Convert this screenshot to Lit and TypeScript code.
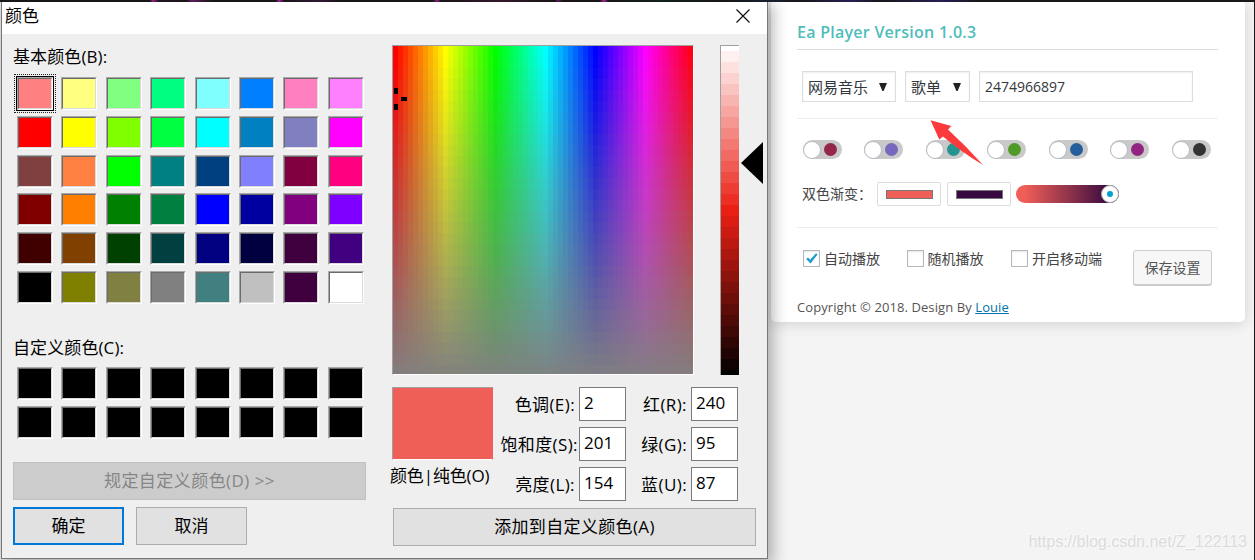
import { LitElement, html, css } from "lit";
import { customElement, property } from "lit/decorators.js";
import { classMap } from "lit/directives/class-map.js";

const BASIC = [
  "#ff8080", "#ffff80", "#80ff80", "#00ff80", "#80ffff", "#0080ff", "#ff80c0", "#ff80ff",
  "#ff0000", "#ffff00", "#80ff00", "#00ff40", "#00ffff", "#0080c0", "#8080c0", "#ff00ff",
  "#804040", "#ff8040", "#00ff00", "#008080", "#004080", "#8080ff", "#800040", "#ff0080",
  "#800000", "#ff8000", "#008000", "#008040", "#0000ff", "#0000a0", "#800080", "#8000ff",
  "#400000", "#804000", "#004000", "#004040", "#000080", "#000040", "#400040", "#400080",
  "#000000", "#808000", "#808040", "#808080", "#408080", "#c0c0c0", "#400040", "#ffffff",
];
const CUSTOM = Array(16).fill("#000000");
const THEMES = ["#94264a", "#7767bd", "#259490", "#509a28", "#255f9b", "#932582", "#333333"];

const stops = (n: number, size: number, color: (i: number) => string, shift = 0) =>
  Array.from({ length: n }, (_, i) => {
    const a = Math.max(0, (i - shift) * size);
    return `${color(i)} ${a}px ${(i + 1 - shift) * size}px`;
  }).join(",");

// Hue runs across in 60 cells, saturation fades to grey down 30 rows.
const HUE = `linear-gradient(to right,${stops(60, 5, (i) => `hsl(${i * 6},100%,50%)`)})`;
const FADE = `linear-gradient(to bottom,${stops(30, 11, (i) => `rgba(128,128,128,${(i / 30).toFixed(3)})`)})`;
const LUM = `linear-gradient(to bottom,${stops(31, 10.97, (i) => `hsl(3,84%,${(100 - (i * 100) / 30).toFixed(2)}%)`, 0.5)})`;

@customElement("swatch-grid")
export class SwatchGrid extends LitElement {
  @property({ attribute: false }) colors: string[] = [];
  @property({ type: Number }) selected = -1;

  static styles = css`
    :host { display: block; }
    .grid {
      display: grid;
      grid-template-columns: repeat(8, 36px);
      grid-auto-rows: 33px;
      column-gap: 8.4px;
      row-gap: 5.8px;
    }
    .swatch {
      box-sizing: border-box;
      border: 1px solid;
      border-color: #a8a8a8 #fff #fff #a8a8a8;
      display: flex;
    }
    .fill {
      flex: 1;
      border: 1px solid;
      border-color: #6b6b6b #dcdcdc #dcdcdc #6b6b6b;
    }
    .selected { outline: 1px solid #000; position: relative; }
    .selected::after {
      content: "";
      position: absolute;
      inset: -4px;
      border: 1px dotted #222;
    }
  `;

  render() {
    return html`<div class="grid">
      ${this.colors.map(
        (c, i) => html`<div class=${classMap({ swatch: true, selected: i === this.selected })}>
          <div class="fill" style="background:${c}"></div>
        </div>`
      )}
    </div>`;
  }
}

@customElement("color-dialog")
export class ColorDialog extends LitElement {
  static styles = css`
    :host { display: block; }
    * { box-sizing: border-box; }
    .dialog {
      width: 767px;
      height: 557px;
      border: 1px solid #777;
      border-top: 0;
      background: #efefef;
      color: #000;
      font: 17px/22px "Open Sans", "Noto Sans CJK SC", sans-serif;
      box-shadow: 3px 4px 14px 2px rgba(0, 0, 0, 0.3);
      white-space: nowrap;
    }
    .title {
      height: 32px;
      background: #fff;
      display: flex;
      justify-content: space-between;
      padding: 3px 16px 0 3px;
    }
    .close { width: 16px; height: 16px; margin-top: 3px; display: block; }
    .body { display: flex; padding-top: 11px; }
    .left { width: 390px; padding-left: 11px; flex: none; }
    .label { height: 22px; letter-spacing: 0.1px; }
    .label.basic { margin-top: 1px; }
    .label.custom { margin-top: 33px; }
    .basicgrid { margin: 9px 0 0 4px; }
    .customgrid { margin: 8px 0 0 4px; }
    .btn {
      height: 38px;
      border: 1px solid #adadad;
      background: #e1e1e1;
      display: flex;
      align-items: center;
      justify-content: center;
    }
    .define {
      width: 353px;
      margin-top: 23px;
      background: #ccc;
      border-color: #c0c0c0;
      color: #868686;
      letter-spacing: 0.45px;
    }
    .pair { display: flex; gap: 12px; margin-top: 7px; }
    .pair .btn { width: 111px; }
    .pair .ok { border: 2px solid #0078d7; }
    .right { width: 374px; flex: none; }
    .pickers { display: flex; height: 331px; }
    .field {
      flex: none;
      width: 302px;
      height: 330px;
      border: 1px solid #a0a0a0;
      border-right-color: #fff;
      border-bottom-color: #fff;
      position: relative;
    }
    .mark { position: absolute; background: #000; }
    .m1 { left: 1px; top: 42px; width: 4px; height: 6px; }
    .m2 { left: 8px; top: 51px; width: 6px; height: 4px; }
    .m3 { left: 1px; top: 58px; width: 4px; height: 6px; }
    .lum {
      flex: none;
      width: 19px;
      height: 330px;
      margin-left: 26px;
      border-left: 1px solid #a0a0a0;
      border-top: 1px solid #a0a0a0;
    }
    .pointer { flex: none; width: 22px; height: 42px; margin: 97px 0 0 2px; display: block; }
    .values { display: flex; margin-top: 11px; height: 114px; }
    .preview { width: 101px; }
    .chip { height: 73px; background: #f05f57; border: 1px solid; border-color: #a0a0a0 #f05f57 #fff #a0a0a0; }
    .caption { margin: 5px 0 0 -2px; letter-spacing: -0.15px; }
    .form {
      display: grid;
      grid-template-columns: 86px 47px 65px 47px;
      grid-auto-rows: 34px;
      row-gap: 6px;
    }
    .name { text-align: right; padding: 7px 4px 0 0; letter-spacing: 0.4px; }
    .name.wide { padding-right: 1px; }
    .num { border: 1px solid #7a7a7a; background: #fff; padding: 4px 0 0 4px; }
    .add { width: 363px; margin: 7px 0 0 1px; letter-spacing: 0.35px; }
  `;

  render() {
    const cell = (a: string, v: string, wide = false) => html`
      <div class=${classMap({ name: true, wide })}>${a}</div>
      <div class="num">${v}</div>`;
    return html`<div class="dialog">
      <div class="title">
        <span>颜色</span>
        <svg class="close" viewBox="0 0 16 16">
          <path d="M1.5 1.5 14.5 14.5M14.5 1.5 1.5 14.5" stroke="#111" stroke-width="1.2" fill="none" />
        </svg>
      </div>
      <div class="body">
        <div class="left">
          <div class="label basic">基本颜色(B):</div>
          <swatch-grid class="basicgrid" .colors=${BASIC} selected="0"></swatch-grid>
          <div class="label custom">自定义颜色(C):</div>
          <swatch-grid class="customgrid" .colors=${CUSTOM}></swatch-grid>
          <div class="btn define">规定自定义颜色(D) &gt;&gt;</div>
          <div class="pair">
            <div class="btn ok">确定</div>
            <div class="btn">取消</div>
          </div>
        </div>
        <div class="right">
          <div class="pickers">
            <div class="field" style="background:${FADE},${HUE}">
              <i class="mark m1"></i><i class="mark m2"></i><i class="mark m3"></i>
            </div>
            <div class="lum" style="background:${LUM}"></div>
            <svg class="pointer" viewBox="0 0 22 42"><path d="M0 21 22 0V42Z" /></svg>
          </div>
          <div class="values">
            <div class="preview">
              <div class="chip"></div>
              <div class="caption">颜色|纯色(O)</div>
            </div>
            <div class="form">
              ${cell("色调(E):", "2")} ${cell("红(R):", "240")}
              ${cell("饱和度(S):", "201", true)} ${cell("绿(G):", "95")}
              ${cell("亮度(L):", "154")} ${cell("蓝(U):", "87")}
            </div>
          </div>
          <div class="btn add">添加到自定义颜色(A)</div>
        </div>
      </div>
    </div>`;
  }
}

@customElement("player-settings")
export class PlayerSettings extends LitElement {
  static styles = css`
    :host { display: block; }
    * { box-sizing: border-box; }
    .card {
      width: 474px;
      height: 320px;
      padding: 19px 27px 0 26px;
      background: #fff;
      border-radius: 0 0 5px 5px;
      box-shadow: 0 2px 14px rgba(0, 0, 0, 0.14);
      color: #444;
      font: 14px/20px "Open Sans", "Noto Sans CJK SC", sans-serif;
      white-space: nowrap;
    }
    .heading {
      height: 29px;
      border-bottom: 1px solid #ddd;
      color: #4fbdba;
      font-size: 16px;
      font-weight: 600;
      letter-spacing: 0.26px;
      line-height: 23px;
    }
    .source { display: flex; padding: 21px 0 0 5px; height: 69px; border-bottom: 1px solid #eee; }
    .box {
      height: 31px;
      border: 1px solid #ddd;
      display: flex;
      align-items: center;
      padding: 1px 8px 0 5px;
      color: #32373c;
      font-size: 15px;
      box-shadow: inset 0 1px 2px rgba(0, 0, 0, 0.07);
    }
    .box.text { font-size: 14px; padding-left: 5px; }
    .site { width: 94px; margin-right: 9px; justify-content: space-between; }
    .kind { width: 65px; margin-right: 9px; justify-content: space-between; }
    .text { width: 214px; }
    .caret { width: 8px; height: 8px; display: block; }
    .themes { display: flex; gap: 22.5px; padding: 21px 0 0 5.5px; height: 62px; }
    .toggle {
      width: 39px;
      height: 19px;
      border-radius: 10px;
      background: #c9c9c9;
      display: flex;
      align-items: center;
      gap: 3px;
    }
    .knob { width: 18px; height: 18px; border-radius: 50%; background: #fff; border: 1px solid #b5bcc2; }
    .dot { width: 13px; height: 13px; border-radius: 50%; }
    .gradient { display: flex; height: 47px; border-bottom: 1px solid #eee; padding-left: 5px; }
    .glabel { width: 75px; padding-top: 3px; font-size: 14px; }
    .well {
      width: 64px;
      height: 24px;
      margin: 1px 6px 0 0;
      border: 1px solid #ddd;
      border-radius: 2px;
      padding: 7px 7px 0 8px;
    }
    .well + .well { margin-right: 5px; }
    .ink { height: 9px; border: 1px solid #777; }
    .slider {
      width: 103px;
      height: 18px;
      margin-top: 4px;
      border-radius: 9px;
      background: linear-gradient(to right, #f05f57 8%, #360940 92%);
      display: flex;
      justify-content: flex-end;
    }
    .thumb {
      width: 18px;
      height: 18px;
      border-radius: 50%;
      background: #fff;
      border: 1px solid #aaa;
      display: flex;
      align-items: center;
      justify-content: center;
    }
    .core { width: 6px; height: 6px; border-radius: 50%; background: #00a0d2; }
    .options { display: flex; height: 69px; padding: 22px 0 0 6px; }
    .check { display: flex; height: 17px; align-items: center; }
    .check span { margin: 1px 0 0 4px; }
    .tick {
      width: 17px;
      height: 17px;
      border: 1px solid #b4b9be;
      display: block;
      box-shadow: inset 0 1px 2px rgba(0, 0, 0, 0.1);
    }
    .c1 { width: 103.5px; }
    .c2 { width: 104.5px; }
    .c3 { width: 122px; }
    .save {
      width: 79px;
      height: 35px;
      border: 1px solid #ccc;
      border-radius: 3px;
      background: #f7f7f7;
      box-shadow: 0 1px 0 #ccc;
      color: #555;
      display: flex;
      align-items: center;
      justify-content: center;
    }
    .copy { color: #555; font-size: 13px; letter-spacing: 0.09px; }
    .link { color: #0073aa; text-decoration: underline; }
  `;

  render() {
    const caret = html`<svg class="caret" viewBox="0 0 8 8"><path d="M0 0H8L4.6 8H3.4Z" fill="#222" /></svg>`;
    const check = (cls: string, label: string, on = false) => html`
      <div class="check ${cls}">
        <svg class="tick" viewBox="0 0 15 15">
          ${on
            ? html`<svg viewBox="0 0 15 15"><path d="M2.2 8.1 4 6.5 6.2 8.7 12 2.2 13.6 3.4 6.5 12.4Z" fill="#1e9ccb" /></svg>`
            : ""}
        </svg>
        <span>${label}</span>
      </div>`;
    return html`<div class="card">
      <div class="heading">Ea Player Version 1.0.3</div>
      <div class="source">
        <div class="box site"><span>网易音乐</span>${caret}</div>
        <div class="box kind"><span>歌单</span>${caret}</div>
        <div class="box text">2474966897</div>
      </div>
      <div class="themes">
        ${THEMES.map(
          (c) => html`<div class="toggle">
            <div class="knob"></div>
            <div class="dot" style="background:${c}"></div>
          </div>`
        )}
      </div>
      <div class="gradient">
        <div class="glabel">双色渐变：</div>
        <div class="well"><div class="ink" style="background:#f05f57"></div></div>
        <div class="well"><div class="ink" style="background:#360940"></div></div>
        <div class="slider"><div class="thumb"><div class="core"></div></div></div>
      </div>
      <div class="options">
        ${check("c1", "自动播放", true)} ${check("c2", "随机播放")} ${check("c3", "开启移动端")}
        <div class="save">保存设置</div>
      </div>
      <div class="copy">Copyright © 2018. Design By <span class="link">Louie</span></div>
    </div>`;
  }
}

@customElement("app-root")
export class AppRoot extends LitElement {
  static styles = css`
    :host { display: block; }
    .screen {
      width: 1255px;
      height: 560px;
      box-sizing: border-box;
      overflow: hidden;
      position: relative;
      background: #f4f4f4;
      border-right: 1px solid #1a171c;
    }
    .strip {
      height: 2px;
      background: linear-gradient(to right, #1c191b 150px, #a328a0 153px, #2a1a2a 158px, #1c191b 186px, #6a2068 192px,
        #1c191b 212px, #1c191b 276px, #b42ab0 279px, #1c191b 284px, #3a1a3c 320px, #1c191b 340px, #1c191b 433px,
        #962690 437px, #1c191b 441px, #3a1a30 500px, #1c191b 555px, #6a2068 558px, #1c191b 563px, #1c191b 600px,
        #b42ab0 604px, #1c191b 608px, #14261e 660px, #1c191b 720px, #182436 770px, #1c191b 800px, #2a2058 850px,
        #1c191b 880px, #2a2058 940px, #1c191b 980px);
    }
    .main { display: flex; padding-left: 1px; }
    .front { position: relative; z-index: 1; }
    .back { margin-left: 3px; }
    .arrow { position: absolute; left: 926px; top: 116px; width: 60px; height: 54px; z-index: 2; }
    .watermark {
      position: absolute;
      right: 7px;
      bottom: 8px;
      font: 16px/20px "Liberation Sans", sans-serif;
      color: #dcdcdc;
      text-shadow: -1px -1px 0 #fbfbfb;
    }
  `;

  render() {
    return html`<div class="screen">
      <div class="strip"></div>
      <div class="main">
        <color-dialog class="front"></color-dialog>
        <player-settings class="back"></player-settings>
      </div>
      <svg class="arrow" viewBox="926 116 60 54">
        <path d="M930.5 120.3 951.3 126 948 129.5 Q966 146 983 165 Q960 151 943 136.5L939.3 139.5Z" fill="#fb3b3b" />
      </svg>
      <div class="watermark">https://blog.csdn.net/Z_122113</div>
    </div>`;
  }
}
